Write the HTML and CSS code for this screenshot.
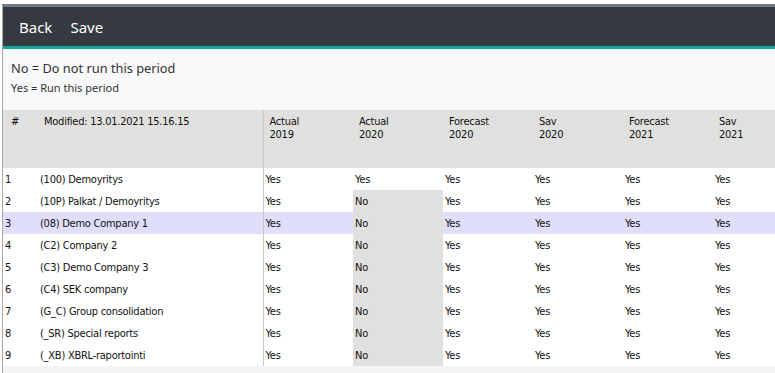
FILE: index.html
```html
<!DOCTYPE html>
<html lang="en">
<head>
  <meta charset="UTF-8" />
  <meta name="viewport" content="width=device-width, initial-scale=1.0"/>
  <title>Run periods</title>
  <link rel="stylesheet" href="styles.css">
</head>
<body>
  <div class="page">
    <div class="toolbar">
      <a href="#" class="toolbar-link">Back</a>
      <a href="#" class="toolbar-link">Save</a>
    </div>

    <div class="legend">
      <p class="legend-no">No = Do not run this period</p>
      <p class="legend-yes">Yes = Run this period</p>
    </div>

    <div class="grid-wrap">
      <table class="grid">
        <colgroup>
          <col class="col-num">
          <col class="col-name">
          <col class="col-period">
          <col class="col-period">
          <col class="col-period">
          <col class="col-period">
          <col class="col-period">
          <col class="col-period">
        </colgroup>
        <thead>
          <tr>
            <th class="th-num">#</th>
            <th class="th-name">Modified: 13.01.2021 15.16.15</th>
            <th>Actual<br>2019</th>
            <th>Actual<br>2020</th>
            <th>Forecast<br>2020</th>
            <th>Sav<br>2020</th>
            <th>Forecast<br>2021</th>
            <th>Sav<br>2021</th>
          </tr>
        </thead>
        <tbody>
          <tr>
            <td>1</td><td class="name">(100) Demoyritys</td>
            <td>Yes</td><td>Yes</td><td>Yes</td><td>Yes</td><td>Yes</td><td>Yes</td>
          </tr>
          <tr>
            <td>2</td><td class="name">(10P) Palkat / Demoyritys</td>
            <td>Yes</td><td class="no">No</td><td>Yes</td><td>Yes</td><td>Yes</td><td>Yes</td>
          </tr>
          <tr class="selected">
            <td>3</td><td class="name">(08) Demo Company 1</td>
            <td>Yes</td><td class="no">No</td><td>Yes</td><td>Yes</td><td>Yes</td><td>Yes</td>
          </tr>
          <tr>
            <td>4</td><td class="name">(C2) Company 2</td>
            <td>Yes</td><td class="no">No</td><td>Yes</td><td>Yes</td><td>Yes</td><td>Yes</td>
          </tr>
          <tr>
            <td>5</td><td class="name">(C3) Demo Company 3</td>
            <td>Yes</td><td class="no">No</td><td>Yes</td><td>Yes</td><td>Yes</td><td>Yes</td>
          </tr>
          <tr>
            <td>6</td><td class="name">(C4) SEK company</td>
            <td>Yes</td><td class="no">No</td><td>Yes</td><td>Yes</td><td>Yes</td><td>Yes</td>
          </tr>
          <tr>
            <td>7</td><td class="name">(G_C) Group consolidation</td>
            <td>Yes</td><td class="no">No</td><td>Yes</td><td>Yes</td><td>Yes</td><td>Yes</td>
          </tr>
          <tr>
            <td>8</td><td class="name">(_SR) Special reports</td>
            <td>Yes</td><td class="no">No</td><td>Yes</td><td>Yes</td><td>Yes</td><td>Yes</td>
          </tr>
          <tr>
            <td>9</td><td class="name">(_XB) XBRL-raportointi</td>
            <td>Yes</td><td class="no">No</td><td>Yes</td><td>Yes</td><td>Yes</td><td>Yes</td>
          </tr>
        </tbody>
      </table>
    </div>
  </div>
</body>
</html>
```

FILE: styles.css
```css
html, body {
  margin: 0;
  padding: 0;
  background-color: #ffffff;
  height: 100%;
  overflow: hidden;
}

.page {
  margin: 4px 0 0 2px;
  border-top: 3px solid #6f7a80;
  border-left: 1px solid #a8a8a8;
  background-color: #f5f5f5;
  height: 100%;
  overflow: hidden;
}

.toolbar {
  height: 39px;
  background-color: #343a40;
  border-bottom: 3px solid #17a59b;
  display: flex;
  align-items: center;
  gap: 18px;
  padding-left: 16px;
}

.toolbar-link {
  font-family: 'Noto Sans', sans-serif;
  font-size: 15px;
  color: #ffffff;
  text-decoration: none;
}

.legend {
  background-color: #f8f9fa;
  padding: 10px 0 0 8px;
  height: 51px;
  color: #333333;
  font-family: 'Noto Sans', sans-serif;
}

.legend p {
  margin: 0;
}

.legend-no {
  font-size: 12.8px;
  line-height: 18px;
}

.legend-yes {
  font-size: 11px;
  line-height: 18px;
  margin-top: 2px !important;
}

.grid-wrap {
  overflow: hidden;
}

.grid {
  border-collapse: collapse;
  table-layout: fixed;
  width: 800px;
  font-family: 'DejaVu Sans Condensed', 'DejaVu Sans', sans-serif;
  font-size: 11px;
  letter-spacing: -0.25px;
  color: #111111;
}

.col-num { width: 35px; }
.col-name { width: 225px; }
.col-period { width: 90px; }

.grid th {
  background-color: #e0e0df;
  height: 58px;
  padding: 5px 6px 0;
  box-sizing: border-box;
  text-align: left;
  vertical-align: top;
  font-weight: normal;
  line-height: 13px;
}

.grid .th-num {
  padding-left: 8px;
}

.grid td {
  height: 22px;
  padding: 0 2px;
  box-sizing: border-box;
  background-color: #ffffff;
  white-space: nowrap;
}

.grid th:nth-child(2),
.grid td.name {
  border-right: 1px solid #c8c8c8;
}

.grid td.no {
  background-color: #e0e0df;
}

.grid tr.selected td {
  background-color: #dfdffc;
}

.grid tr.selected td.no {
  background-color: #e0e0df;
}
```
